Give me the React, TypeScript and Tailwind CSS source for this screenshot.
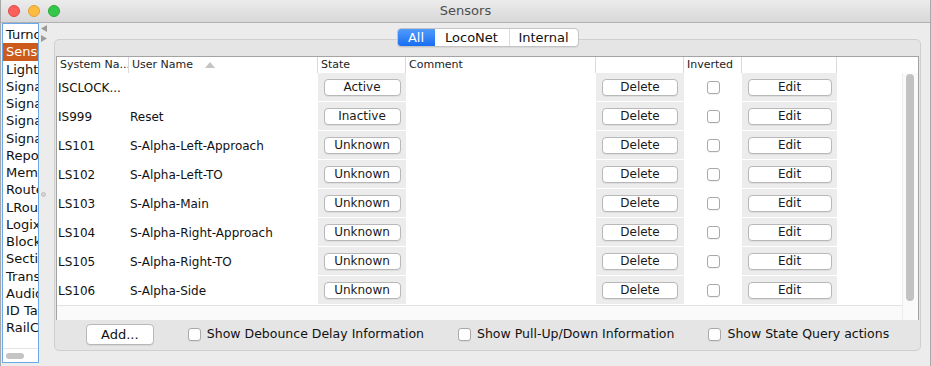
import React from "react";

const sidebarItems = [
  "Turnouts",
  "Sensors",
  "Lights",
  "Signal Heads",
  "Signal Masts",
  "Signal Groups",
  "Signal Mast Logic",
  "Reporters",
  "Memory Variables",
  "Routes",
  "LRoutes",
  "Logix",
  "Blocks",
  "Sections",
  "Transits",
  "Audio",
  "ID Tags",
  "RailCom",
];

const rows = [
  { sys: "ISCLOCK...", user: "", state: "Active" },
  { sys: "IS999", user: "Reset", state: "Inactive" },
  { sys: "LS101", user: "S-Alpha-Left-Approach", state: "Unknown" },
  { sys: "LS102", user: "S-Alpha-Left-TO", state: "Unknown" },
  { sys: "LS103", user: "S-Alpha-Main", state: "Unknown" },
  { sys: "LS104", user: "S-Alpha-Right-Approach", state: "Unknown" },
  { sys: "LS105", user: "S-Alpha-Right-TO", state: "Unknown" },
  { sys: "LS106", user: "S-Alpha-Side", state: "Unknown" },
];

const Btn = ({ label, className }: { label: string; className: string }) => (
  <div
    className={`h-[17px] bg-white border border-[#b8b8b8] rounded-[4px] flex items-center justify-center text-[12px] text-[#1a1a1a] shadow-[0_1px_0_rgba(0,0,0,0.06)] ${className}`}
  >
    {label}
  </div>
);

const Check = () => (
  <div className="w-[13px] h-[13px] shrink-0 bg-white border border-[#a9a9a9] rounded-[3px] shadow-[0_1px_0_rgba(0,0,0,0.05)]" />
);

function TitleBar() {
  return (
    <div className="h-[23px] grid grid-cols-[1fr_auto_1fr] items-center bg-gradient-to-b from-[#ececec] to-[#d8d8d8] border-b border-[#b1b1b1]">
      {/* traffic lights */}
      <div className="flex gap-[8px] pl-[7px]">
        <div className="w-[12px] h-[12px] rounded-full bg-[#fc605c] border border-[#de4a45]" />
        <div className="w-[12px] h-[12px] rounded-full bg-[#fdbc40] border border-[#dea236]" />
        <div className="w-[12px] h-[12px] rounded-full bg-[#34c84a] border border-[#27aa35]" />
      </div>
      <div className="text-[13px] text-[#4d4d4d]">Sensors</div>
      <div />
    </div>
  );
}

function Sidebar() {
  return (
    <div className="ml-[1px] w-[37px] h-[340px] bg-white border border-[#6ba8ea] flex flex-col">
      <div className="flex-1 pt-[2px] overflow-hidden">
        {sidebarItems.map((item, i) => (
          <div
            key={i}
            className={`h-[17.25px] leading-[17.25px] pl-[3px] text-[13px] whitespace-nowrap overflow-hidden ${
              i === 1 ? "bg-[#cb5a1c] text-white" : "text-[#111]"
            }`}
          >
            {item}
          </div>
        ))}
      </div>
      <div className="h-[14px] border-t border-[#e4e4e4] flex items-center pl-[3px]">
        <div className="w-[18px] h-[6px] rounded-full bg-[#c4c4c4]" />
      </div>
    </div>
  );
}

function Splitter() {
  return (
    <div className="w-[15px] flex flex-col pl-[2px] pt-[2px]">
      <svg width="7" height="18" viewBox="0 0 7 18">
        <polygon points="6,0 6,7 0,3.5" fill="#9a9a9a" />
        <polygon points="0,10 0,17 6,13.5" fill="#9a9a9a" />
      </svg>
      <div className="mt-[149px] w-[5px] h-[5px] rounded-full bg-[#d4d4d4] border border-[#c0c0c0]" />
    </div>
  );
}

function Tabs() {
  return (
    <div className="relative z-10 flex justify-center">
      <div className="flex h-[19px] text-[13px] rounded-[4px] border border-[#c4c4c4] bg-white shadow-[0_1px_0_rgba(0,0,0,0.06)] overflow-hidden">
        <div className="w-[37px] flex items-center justify-center text-white bg-gradient-to-b from-[#4f9bfb] to-[#176df1]">
          All
        </div>
        <div className="w-[75px] flex items-center justify-center text-[#111] border-r border-[#dcdcdc]">
          LocoNet
        </div>
        <div className="w-[68px] flex items-center justify-center text-[#111]">Internal</div>
      </div>
    </div>
  );
}

function HeaderCell({ w, label, sort }: { w: string; label: string; sort?: boolean }) {
  return (
    <div className={`${w} h-full flex items-center pl-[3px] border-r border-[#d9d9d9] whitespace-nowrap overflow-hidden`}>
      {label}
      {sort && (
        <svg width="10" height="6" viewBox="0 0 10 6" className="ml-[12px]">
          <polygon points="0,6 10,6 5,0" fill="#c4c4c4" />
        </svg>
      )}
    </div>
  );
}

function SensorTable() {
  return (
    <div className="mx-[1px] h-[264px] bg-white border border-[#a3a3a3] flex flex-col">
      {/* header */}
      <div className="h-[16px] flex text-[11px] text-[#222]">
        <HeaderCell w="w-[72px]" label="System Na..." />
        <HeaderCell w="w-[189px]" label="User Name" sort />
        <HeaderCell w="w-[88px]" label="State" />
        <HeaderCell w="w-[190px]" label="Comment" />
        <HeaderCell w="w-[88px]" label="" />
        <HeaderCell w="w-[58px]" label="Inverted" />
        <HeaderCell w="w-[95px]" label="" />
      </div>
      <div className="flex-1 flex">
        <div className="flex-1 flex flex-col">
          <div className="flex-1 text-[12px] text-[#111]">
            {rows.map((r, i) => (
              <div key={i} className="h-[29px] flex">
                <div className="w-[72px] pl-[1px] flex items-center whitespace-nowrap overflow-hidden">{r.sys}</div>
                <div className="w-[189px] pl-[1px] flex items-center whitespace-nowrap">{r.user}</div>
                <div className="w-[88px] bg-[#ececec] border-b border-white flex items-center justify-center">
                  <Btn label={r.state} className="w-[77px]" />
                </div>
                <div className="w-[190px]" />
                <div className="w-[88px] bg-[#ececec] border-b border-white flex items-center justify-center">
                  <Btn label="Delete" className="w-[76px]" />
                </div>
                <div className="w-[58px] flex items-center justify-center">
                  <Check />
                </div>
                <div className="w-[95px] bg-[#ececec] border-b border-white flex items-center justify-center">
                  <Btn label="Edit" className="w-[84px]" />
                </div>
              </div>
            ))}
          </div>
          <div className="h-[15px] border-t border-[#e2e2e2] bg-[#fafafa]" />
        </div>
        {/* vertical scrollbar */}
        <div className="w-[16px] border-l border-[#ececec] bg-[#fafafa] pt-[1px] pl-[3px]">
          <div className="w-[8px] h-[227px] rounded-full bg-[#c2c2c2]" />
        </div>
      </div>
    </div>
  );
}

function BottomBar() {
  return (
    <div className="flex-1 flex items-center justify-center gap-[34px] text-[12.5px] text-[#111] pb-[1px]">
      <div className="w-[68px] h-[21px] bg-white border border-[#b8b8b8] rounded-[4px] flex items-center justify-center text-[13px] shadow-[0_1px_0_rgba(0,0,0,0.06)]">
        Add...
      </div>
      <div className="flex items-center gap-[6px]">
        <Check />
        Show Debounce Delay Information
      </div>
      <div className="flex items-center gap-[6px]">
        <Check />
        Show Pull-Up/Down Information
      </div>
      <div className="flex items-center gap-[6px]">
        <Check />
        Show State Query actions
      </div>
    </div>
  );
}

export default function App() {
  return (
    <div className="w-[931px] h-[366px] bg-[#ececec] overflow-hidden font-['DejaVu_Sans',sans-serif] border-x border-[#a8a8a8]">
      <TitleBar />
      <div className="flex">
        <Sidebar />
        <Splitter />
        <div className="flex-1 pt-[5px] pr-[9px] flex flex-col">
          <Tabs />
          <div className="-mt-[8px] h-[312px] rounded-[5px] border border-[#cfcfcf] bg-[#e5e5e5] pt-[16px] flex flex-col">
            <SensorTable />
            <BottomBar />
          </div>
        </div>
      </div>
    </div>
  );
}
